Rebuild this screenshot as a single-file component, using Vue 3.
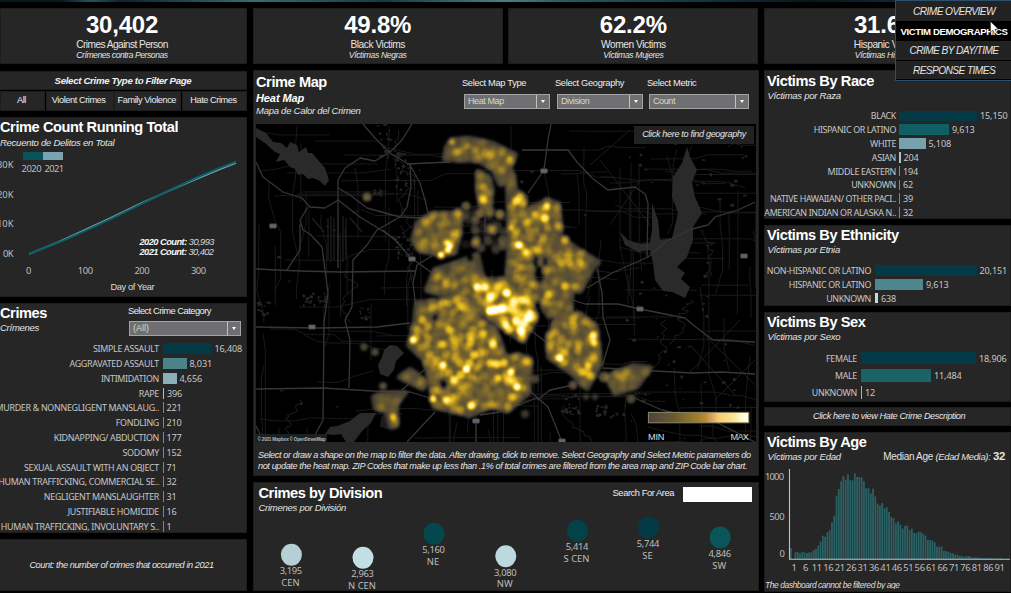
<script setup>
const kpis = [
  { value: '30,402', label: 'Crimes Against Person', es: 'Crímenes contra Personas' },
  { value: '49.8%', label: 'Black Victims', es: 'Víctimas Negras' },
  { value: '62.2%', label: 'Women Victims', es: 'Víctimas Mujeres' },
  { value: '31.6%', label: 'Hispanic Victims', es: 'Víctimas Hispanas' },
]
const crimes = [
  ['SIMPLE ASSAULT', 49, '16,408', '#033a45'],
  ['AGGRAVATED ASSAULT', 24, '8,031', '#4a8388'],
  ['INTIMIDATION', 14, '4,656', '#8aafb9'],
  ['RAPE', 1.5, '396', '#a9c3c6'],
  ['MURDER & NONNEGLIGENT MANSLAUG..', 1, '221', '#7b8788'],
  ['FONDLING', 1, '210', '#7b8788'],
  ['KIDNAPPING/ ABDUCTION', 1, '177', '#7b8788'],
  ['SODOMY', 1, '152', '#7b8788'],
  ['SEXUAL ASSAULT WITH AN OBJECT', 1, '71', '#7b8788'],
  ['HUMAN TRAFFICKING, COMMERCIAL SE..', 1, '32', '#7b8788'],
  ['NEGLIGENT MANSLAUGHTER', 1, '31', '#7b8788'],
  ['JUSTIFIABLE HOMICIDE', 1, '16', '#7b8788'],
  ['HUMAN TRAFFICKING, INVOLUNTARY S..', 1, '1', '#7b8788'],
]
const race = [
  ['BLACK', 78, '15,150', '#033a45'],
  ['HISPANIC OR LATINO', 50, '9,613', '#0f5f64'],
  ['WHITE', 26.5, '5,108', '#78a1ae'],
  ['ASIAN', 1.5, '204', '#a9c3c6'],
  ['MIDDLE EASTERN', 1, '194', '#7b9092'],
  ['UNKNOWN', 1, '62', '#7b8788'],
  ['NATIVE HAWAIIAN/ OTHER PACI..', 1, '39', '#7b8788'],
  ['AMERICAN INDIAN OR ALASKA N..', 1, '32', '#7b8788'],
]
const ethnicity = [
  ['NON-HISPANIC OR LATINO', 102, '20,151', '#033a45'],
  ['HISPANIC OR LATINO', 48.5, '9,613', '#4d878d'],
  ['UNKNOWN', 3.5, '638', '#bedbe0'],
]
const sex = [
  ['FEMALE', 115, '18,906', '#033a45'],
  ['MALE', 70, '11,484', '#1b6367'],
  ['UNKNOWN', 1, '12', '#9fb6ba'],
]
const divisions = [
  { n: '3,195', name: 'CEN', x: 291.4, y: 554.8, c: '#b5d0d5' },
  { n: '2,963', name: 'N CEN', x: 363, y: 557.7, c: '#c1dfe4' },
  { n: '5,160', name: 'NE', x: 434, y: 533.8, c: '#04484f' },
  { n: '3,080', name: 'NW', x: 505.8, y: 556.2, c: '#bcd9df' },
  { n: '5,414', name: 'S CEN', x: 577.5, y: 530.8, c: '#04424a' },
  { n: '5,744', name: 'SE', x: 648.5, y: 527.4, c: '#033a45' },
  { n: '4,846', name: 'SW', x: 720.2, y: 537.5, c: '#0a555a' },
]
const ages = [33, 0, 20, 22, 17, 22, 20, 18, 20, 20, 27, 30, 40, 52, 70, 67, 80, 86, 110, 130, 190, 210, 233, 249, 238, 254, 236, 236,
  257, 246, 246, 245, 233, 212, 212, 197, 211, 188, 166, 160, 168, 152, 155, 141, 126, 122, 107, 113, 103, 91, 100, 100, 86, 91, 78, 78,
  82, 80, 75, 70, 57, 57, 55, 50, 37, 37, 37, 24, 24, 21, 18, 17, 13, 13, 9, 9, 6, 9, 9, 6, 5, 5, 4, 4, 3, 3, 2, 3, 2, 2, 1, 1, 2]
const ageTicks = Array.from({ length: 19 }, (_, i) => 1 + i * 5)

/* seeded generator keeps the map identical on every load */
let seed = 77
function rnd() {
  seed = (seed * 1664525 + 1013904223) % 4294967296
  return seed / 4294967296
}
const highways = [
  'M256 162L263 177L283 192L302 198L310 207L325 208L338 200L360 217L397 240',
  'M338 268V180L345 168L360 158L375 161L390 152L402 140L412 124',
  'M363 124L375 138L390 153L410 165L420 183L425 200L428 213',
  'M407 164L450 162',
  'M410 165L411 187L407 207L400 217L377 230L367 245L353 260L352 307L345 320L350 340L349 388',
  'M338 188L350 195L367 208L400 217L423 218',
  'M308 207L300 220L303 230L310 234L322 247L325 270L328 293L324 323L323 420L315 435L312 442',
  'M300 224V250L287 270',
  'M256 269L300 271L340 272L416 271',
  'M256 327L317 328L377 327L410 323',
  'M256 389L323 388L373 391L410 392L430 398',
  'M383 230L397 242L410 257L432 273',
  'M432 256L417 265L413 283L416 308',
  'M435 412L407 442M476 420V442M435 360L402 390',
  'M573 300L585 304L618 304L640 309L685 318L697 328L713 340L755 342',
  'M587 288L612 273L648 257L665 242L692 229L708 225L715 217L738 210L755 202',
  'M522 150H568L577 162L592 178L608 190L635 187L645 194L648 203L647 257',
  'M551 124L548 140L544 170L528 193',
  'M597 268L602 293L603 317L610 340L602 367',
  'M603 368L655 371L692 373L722 372L755 374',
  'M522 373L532 393L548 407L562 442M537 400L550 390L573 385',
  'M632 397L662 410L718 423L755 442M530 330L550 345M485 232V215',
  'M256 426L264 442M480 415L500 412L537 398',
]
const streets = []
for (let i = 0; i < 150; i++) {
  const horiz = i % 2
  let x = 256 + rnd() * 500
  let y = 124 + rnd() * 318
  let d = `M${x.toFixed(0)} ${y.toFixed(0)}`
  const n = 3 + Math.floor(rnd() * 6)
  for (let k = 0; k < n; k++) {
    const step = 8 + rnd() * 20
    const drift = rnd() > 0.75 ? (rnd() - 0.5) * 14 : 0
    x += horiz ? step : drift
    y += horiz ? drift : step
    d += `L${x.toFixed(1)} ${y.toFixed(1)}`
  }
  streets.push(d)
}
const creeks = []
const creekStarts = [[398, 130], [405, 180], [402, 225], [565, 405], [665, 320], [700, 230], [345, 270], [300, 400], [690, 300]]
for (const [sx, sy] of creekStarts) {
  let x = sx
  let y = sy
  let d = `M${x} ${y}`
  for (let k = 0; k < 26; k++) {
    x += (rnd() - 0.5) * 8
    y += rnd() * 4
    d += `L${x.toFixed(1)} ${y.toFixed(1)}`
  }
  creeks.push(d)
}
const ponds = []
function pondGroup(cx, cy, w, h, n) {
  for (let i = 0; i < n; i++) {
    ponds.push({ x: cx + (rnd() - 0.5) * w, y: cy + (rnd() - 0.5) * h, rx: 0.6 + rnd() * 1.6, ry: 0.6 + rnd() * 1.2 })
  }
}
pondGroup(385, 142, 14, 40, 16)
pondGroup(402, 172, 14, 40, 24)
pondGroup(315, 300, 24, 14, 22)
pondGroup(265, 308, 14, 14, 14)
pondGroup(362, 315, 16, 16, 10)
pondGroup(378, 193, 8, 7, 12)
pondGroup(404, 248, 14, 22, 18)
pondGroup(570, 405, 20, 20, 20)
pondGroup(610, 412, 30, 14, 20)
pondGroup(720, 180, 60, 70, 14)
pondGroup(690, 340, 110, 160, 34)
pondGroup(500, 290, 480, 300, 40)

/* populated areas: polygon, sample spacing, strength */
const areas = [
  [[447, 147, 452, 140, 470, 139, 493, 144, 515, 155, 512, 162, 503, 174, 492, 168, 478, 160, 445, 159], 4.8, 0.5],
  [[478, 172, 488, 177, 492, 190, 490, 206, 481, 207, 478, 190], 4.5, 0.7],
  [[508, 174, 513, 175, 515, 190, 525, 197, 523, 213, 533, 207, 547, 201, 558, 204, 560, 223, 560, 237, 578, 250, 598, 262, 592, 268, 586, 280, 580, 291, 572, 290, 570, 310, 549, 316, 543, 307, 542, 293, 530, 305, 507, 280, 509, 260, 509, 220], 5, 0.6],
  [[430, 215, 459, 213, 459, 233, 455, 252, 442, 255, 420, 250, 413, 240, 418, 223], 4.8, 0.55],
  [[457, 209, 503, 207, 505, 250, 477, 253, 462, 247], 6.2, 0.65],
  [[435, 270, 457, 263, 477, 255, 483, 280, 497, 287, 487, 313, 470, 316, 447, 296, 427, 290], 5.2, 0.5],
  [[477, 280, 503, 280, 531, 300, 535, 318, 523, 341, 503, 327, 483, 313], 4, 0.95],
  [[417, 303, 457, 300, 473, 315, 495, 329, 503, 350, 530, 359, 528, 393, 507, 411, 493, 405, 470, 415, 434, 406, 432, 387, 425, 360, 409, 345, 415, 323], 4.7, 0.72],
  [[557, 317, 580, 314, 596, 327, 600, 363, 587, 388, 572, 373, 549, 357, 548, 340], 4.7, 0.68],
  [[607, 377, 633, 366, 650, 368, 637, 386, 615, 393], 4.8, 0.4],
  [[374, 397, 383, 394, 405, 393, 396, 403, 396, 425, 391, 427, 387, 410, 376, 408], 4.6, 0.35],
  [[400, 377, 410, 370, 427, 383, 423, 388], 4.8, 0.4],
  [[492, 165, 508, 160, 513, 180, 500, 184], 5.5, 0.3],
]
const bases = areas.filter((_, i) => i !== 4).map(([p]) => p.join(' '))
const gaps = [[494, 262, 9, 11], [497, 194, 4, 9], [468, 230, 5, 7], [540, 275, 5, 9], [536, 262, 3, 6], [443, 385, 4, 6], [545, 330, 5, 7], [512, 349, 7, 6], [470, 258, 3, 4], [488, 222, 4, 4], [436, 318, 4, 3], [545, 262, 3, 4]]
function inside(p, x, y) {
  let hit = false
  for (let i = 0, j = p.length - 2; i < p.length; j = i, i += 2) {
    if (p[i + 1] > y !== p[j + 1] > y && x < ((p[j] - p[i]) * (y - p[i + 1])) / (p[j + 1] - p[i + 1]) + p[i]) hit = !hit
  }
  return hit
}
const heat = []
for (const [poly, gap, power] of areas) {
  for (let y = 130; y < 436; y += gap) {
    for (let x = 360; x < 660; x += gap) {
      const px = x + (rnd() - 0.5) * gap * 1.2
      const py = y + (rnd() - 0.5) * gap * 1.2
      const o = power * (0.06 + rnd() ** 2.6 * 0.42)
      const skip = rnd() < 0.05
      if (skip || !inside(poly, px, py)) continue
      if (gaps.some(([gx, gy, a, b]) => ((px - gx) / a) ** 2 + ((py - gy) / b) ** 2 < 1)) continue
      heat.push({ x: px, y: py, r: 4.1, o })
    }
  }
}
const spots = [
  [452, 142, .4, 3], [510, 158, .22, 3], [468, 146, .2, 3.5], [458, 152, .2, 4], [475, 150, .2, 4], [483, 200, .45, 4], [516, 201, .6, 4], [520, 197, .45, 4], [547, 206, .6, 3.4], [545, 218, .55, 4], [519, 245, .95, 3.6], [526, 252, .5, 3.5],
  [448, 250, .85, 3.2], [441, 255, .9, 3.2], [447, 243, .65, 3], [450, 246, .75, 3], [565, 240, .45, 4], [511, 228, .5, 3], [477, 287, .85, 3.6], [485, 287, .65, 3.5], [507, 293, .9, 3.8],
  [490, 298, .6, 4], [490, 311, 1, 4], [495, 310, 1, 4], [502, 308.5, 1, 4], [506, 325, .75, 3.5], [516, 321, .75, 4], [528, 318, .8, 4.2], [521, 331, .85, 4], [530, 313, .75, 3.6], [514, 303, .45, 4],
  [521, 300, .4, 4], [524, 323, .65, 4], [413, 340, .85, 3.4], [443, 365, .85, 3.2], [466.5, 369, .95, 3.8], [511, 372, .85, 3.2], [517, 387, .95, 3.4], [454, 380, .65, 4], [433, 399, .75, 3.4], [446, 400, .7, 3.4],
  [471, 406, .75, 3.8], [493, 344, .6, 4], [474, 355, .5, 4], [497, 364, .55, 4.2], [504, 363, .5, 4], [490, 363, .45, 4], [483, 333, .4, 4], [559.5, 358, .95, 3.6], [593, 335, .6, 3.5], [594, 343, .6, 3.5],
  [588, 366, .5, 3.4], [565, 286, .45, 4], [548, 295, .45, 4], [393, 417, .5, 3.4], [450, 330, .4, 4], [470, 336, .4, 4], [498, 378, .5, 3.5], [512, 397, .45, 4], [535, 214, .4, 3.6], [580, 262, .35, 4],
  [367, 197, .28, 4], [364, 347, .18, 3.5], [375, 352, .2, 3.5], [466, 206, .25, 4], [631, 399, .2, 4], [535, 379, .17, 4], [525, 414, .13, 4], [586, 397, .12, 3], [595, 397, .12, 3], [383, 386, .22, 3.5], [573, 385, .22, 4], [604, 377, .22, 5],
]
for (const [x, y, o, r] of spots) heat.push({ x, y, r, o })
const signs = [[273, 226], [412, 259], [312, 327], [544, 171], [640, 309], [744, 256], [476, 421], [562, 441]]
</script>

<template>
  <div class="page">
    <div class="strip"></div>
    <header class="kpis">
      <section v-for="k in kpis" :key="k.value" class="panel kpi">
        <b>{{ k.value }}</b><span>{{ k.label }}</span><i>{{ k.es }}</i>
      </section>
    </header>

    <main class="cols">
      <div class="col left">
        <section class="filter">
          <h3 class="panel">Select Crime Type to Filter Page</h3>
          <div class="tabs">
            <button class="panel">All</button><button class="panel">Violent Crimes</button><button class="panel">Family Violence</button><button class="panel">Hate Crimes</button>
          </div>
        </section>

        <section class="panel running">
          <h2>Crime Count Running Total</h2>
          <p class="sub">Recuento de Delitos en Total</p>
          <svg class="plot" width="247" height="145" viewBox="0 151 247 145">
            <rect x="23" y="152" width="20" height="8" fill="#07555a" /><rect x="43" y="152" width="20" height="8" fill="#7aa3b0" />
            <g class="tick">
              <text x="21.5" y="172" textLength="20">2020</text><text x="44.5" y="172" textLength="19.5">2021</text>
              <text x="-3" y="167.6" textLength="16.5">30K</text><text x="-3" y="197.5" textLength="16.5">20K</text><text x="-3" y="227.2" textLength="16.5">10K</text><text x="3" y="256.5" textLength="10.5">0K</text>
              <text x="26" y="273.6">0</text><text x="77.7" y="273.6" textLength="15.5">100</text><text x="134.5" y="273.6" textLength="15">200</text><text x="191" y="273.6" textLength="15">300</text>
            </g>
            <path d="M29 254L60 241.3L84 230.3L112 217.2L140 203.8L168 191.3L196 179.2L220 169.3L236 163" fill="none" stroke="#7aa3b0" stroke-width="1.6" />
            <path d="M29 254L60 241.8L84 231.4L112 218.3L140 204.7L168 191L196 178L220 167.9L236 161.7" fill="none" stroke="#0b6266" stroke-width="2" />
            <g class="note"><text x="139.5" y="244.6" textLength="75"><tspan class="bold">2020 Count:</tspan> 30,993</text><text x="139.5" y="254.8" textLength="74.5"><tspan class="bold">2021 Count:</tspan> 30,402</text></g>
            <text class="cap" x="110.5" y="290" textLength="44">Day of Year</text>
          </svg>
        </section>

        <section class="panel crimes">
          <div class="crimes-head">
            <div><h2>Crimes</h2><p class="sub">Crímenes</p></div>
            <div class="field cat"><label>Select Crime Category</label><div class="select"><span>(All)</span><em></em></div></div>
          </div>
          <div class="bars b-crimes">
            <div v-for="r in crimes" :key="r[0]" class="row"><span class="name">{{ r[0] }}</span><span class="bar" :style="{ width: r[1] + 'px', background: r[3] }"></span><span class="val">{{ r[2] }}</span></div>
          </div>
        </section>
        <section class="panel count"><i>Count: the number of crimes that occurred in 2021</i></section>
      </div>

      <div class="col mid">
        <section class="panel mapcard">
          <div class="map-head">
            <div class="map-title"><h2>Crime Map</h2><h4>Heat Map</h4><p class="sub">Mapa de Calor del Crimen</p></div>
            <div class="field f1"><label>Select Map Type</label><div class="select"><span>Heat Map</span><em></em></div></div>
            <div class="field f2"><label>Select Geography</label><div class="select"><span>Division</span><em></em></div></div>
            <div class="field f3"><label>Select Metric</label><div class="select"><span>Count</span><em></em></div></div>
          </div>
          <div class="map">
            <svg width="500" height="318" viewBox="256 124 500 318">
              <defs>
                <filter id="heat" x="350" y="120" width="320" height="322" filterUnits="userSpaceOnUse" color-interpolation-filters="sRGB">
                  <feGaussianBlur stdDeviation="1.8" />
                  <feColorMatrix values="0 0 0 1 0  0 0 0 1 0  0 0 0 1 0  0 0 0 1 0" />
                  <feComponentTransfer>
                    <feFuncR type="table" tableValues=".27 .28 .34 .45 .6 .76 .9 1 1 1 1" />
                    <feFuncG type="table" tableValues=".25 .26 .3 .38 .49 .61 .74 .86 .95 1 1" />
                    <feFuncB type="table" tableValues=".22 .22 .21 .18 .16 .13 .12 .3 .65 .95 1" />
                    <feFuncA type="table" tableValues="0 .7 1 1 1 1 1 1 1 1 1" />
                  </feComponentTransfer>
                </filter>
                <mask id="holes" x="350" y="120" width="320" height="322" maskUnits="userSpaceOnUse">
                  <rect x="350" y="120" width="320" height="322" fill="#fff" />
                  <ellipse v-for="(g, i) in gaps" :key="i" :cx="g[0]" :cy="g[1]" :rx="g[2]" :ry="g[3]" fill="#000" />
                </mask>
                <linearGradient id="ramp"><stop offset="0" stop-color="#4c443a" /><stop offset=".25" stop-color="#695933" /><stop offset=".5" stop-color="#a08229" /><stop offset=".57" stop-color="#b98a37" /><stop offset=".64" stop-color="#dda565" /><stop offset=".7" stop-color="#f6cd6c" /><stop offset=".85" stop-color="#fbe493" /><stop offset=".93" stop-color="#fdfbd0" /><stop offset="1" stop-color="#fffdea" /></linearGradient>
              </defs>
              <rect x="256" y="124" width="500" height="318" fill="#000" />
              <g fill="none" stroke="#1c1c1c" stroke-width=".9">
                <path v-for="(d, i) in streets" :key="i" :d="d" /><path v-for="(d, i) in creeks" :key="'c' + i" :d="d" stroke="#222" />
                <path d="M328 218V260M331 216V262M334 218V260M343 216V262M346 218V258M312 218L324 232M350 218L362 232" stroke="#202020" stroke-width="1.2" />
                <path d="M700 330L755 385M690 345L735 395M740 320L690 372M755 360L715 400M610 225L640 180M600 160L650 225M630 130L590 165" stroke="#1f1f1f" />
              </g>
              <g fill="#2a2a2a">
                <path d="M256 128L266 133L273 142L281 143L287 148L290 142L297 145L299 152L306 147L308 153L312 153L318 160L325 168L329 180L325 186L320 181L313 178L308 179L303 174L298 175L295 169L290 167L284 160L276 162L280 154L275 152L266 144L256 137Z" />
                <path d="M687 147L690 157L697 170L692 182L695 197L702 213L693 227L693 240L687 257L677 267L685 273L681 279L690 287L685 298L672 292L663 291L655 280L653 263L650 250L638 252L625 245L620 232L628 240L640 244L650 243L652 230L652 203L658 220L660 240L672 238L678 213L672 197L673 177L682 163Z" />
                <path d="M384 350L390 345L397 346L404 353L396 361L394 370L388 377L380 374L378 365L382 357Z" />
                <path d="M325 434L330 427L337 426L350 421L360 413L376 413L371 423L362 431L354 442H346L341 434L333 435Z" />
                <path d="M381 418L387 410L391 421L388 429L380 427Z" fill="#1b1b1b" />
                <ellipse v-for="(p, i) in ponds" :key="i" :cx="p.x" :cy="p.y" :rx="p.rx" :ry="p.ry" fill="#242424" />
              </g>
              <g fill="none" stroke="#363636" stroke-width="1.3" stroke-linejoin="round"><path v-for="d in highways" :key="d" :d="d" /></g>
              <g filter="url(#heat)">
                <g opacity=".17" mask="url(#holes)"><polygon v-for="b in bases" :key="b" :points="b" fill="#fff" stroke="#fff" stroke-width="5.5" stroke-linejoin="round" /></g>
                <circle v-for="(h, i) in heat" :key="i" :cx="h.x" :cy="h.y" :r="h.r" fill="#fff" :fill-opacity="h.o" />
              </g>
              <rect v-for="(s, i) in signs" :key="i" :x="s[0] - 3.5" :y="s[1] - 2.2" width="7" height="4.4" rx="1" fill="#62656a" stroke="#33373b" stroke-width=".8" />
              <rect x="256" y="434" width="71" height="8" fill="#1b2023" />
              <text class="credit" x="257.5" y="441.4" textLength="68">© 2021 Mapbox © OpenStreetMap</text>
              <rect x="648.4" y="412.4" width="100.4" height="10.4" fill="url(#ramp)" stroke="#89876a" />
              <text class="minmax" x="648" y="440" textLength="16.5">MIN</text><text class="minmax" x="730.5" y="440" textLength="18.5">MAX</text>
            </svg>
            <div class="find"><i>Click here to find geography</i></div>
          </div>
          <svg class="help" width="500" height="26" viewBox="254 447 500 26">
            <text x="258" y="458.3" textLength="493">Select or draw a shape on the map to filter the data. After drawing, click to remove. Select Geography and Select Metric parameters do</text>
            <text x="258" y="468.7" textLength="489.5">not update the heat map. ZIP Codes that make up less than .1% of total crimes are filtered from the area map and ZIP Code bar chart.</text>
          </svg>
        </section>

        <section class="panel division">
          <div class="div-head">
            <div><h2>Crimes by Division</h2><p class="sub">Crimenes por División</p></div>
            <div class="search"><label>Search For Area</label><input aria-label="Search For Area" /></div>
          </div>
          <svg width="504" height="75" viewBox="254 514 504 75">
            <g v-for="d in divisions" :key="d.name" class="lab">
              <ellipse :cx="d.x" :cy="d.y" rx="10.5" ry="11" :fill="d.c" />
              <text :x="d.x - 11.7" :y="d.y + 19.6" textLength="22.5">{{ d.n }}</text>
              <text :x="d.x - 1" :y="d.y + 31.2" text-anchor="middle">{{ d.name }}</text>
            </g>
          </svg>
        </section>
      </div>

      <div class="col right">
        <section class="panel race">
          <h2>Victims By Race</h2><p class="sub">Víctimas por Raza</p>
          <div class="bars b-race"><div v-for="r in race" :key="r[0]" class="row"><span class="name">{{ r[0] }}</span><span class="bar" :style="{ width: r[1] + 'px', background: r[3] }"></span><span class="val">{{ r[2] }}</span></div></div>
        </section>
        <section class="panel eth">
          <h2>Victims By Ethnicity</h2><p class="sub">Víctimas por Etnia</p>
          <div class="bars b-eth"><div v-for="r in ethnicity" :key="r[0]" class="row"><span class="name">{{ r[0] }}</span><span class="bar" :style="{ width: r[1] + 'px', background: r[3] }"></span><span class="val">{{ r[2] }}</span></div></div>
        </section>
        <section class="panel sex">
          <h2>Victims By Sex</h2><p class="sub">Víctimas por Sexo</p>
          <div class="bars b-sex"><div v-for="r in sex" :key="r[0]" class="row"><span class="name">{{ r[0] }}</span><span class="bar" :style="{ width: r[1] + 'px', background: r[3] }"></span><span class="val">{{ r[2] }}</span></div></div>
        </section>
        <section class="panel hate"><i>Click here to view Hate Crime Description</i></section>
        <section class="panel age">
          <h2>Victims By Age</h2>
          <div class="age-sub"><p class="sub">Víctimas por Edad</p><p class="median">Median Age <i>(Edad Media):</i> <b>32</b></p></div>
          <svg width="246" height="127" viewBox="765 463 246 127">
            <g fill="#2a6165"><rect v-for="(a, i) in ages" :key="i" :x="790 + i * 2.283" :y="560 - a / 3" width="1.75" :height="a / 3" /></g>
            <path d="M789.5 470V560.3H1011" fill="none" stroke="#bfc3c3" stroke-width="1.1" />
            <g class="tick">
              <text x="765" y="481" textLength="19">1000</text><text x="769.5" y="520.6" textLength="15">500</text><text x="779.5" y="557.6">0</text>
              <text v-for="(t, i) in ageTicks" :key="t" :x="794.2 + i * 11.42" y="572.3" text-anchor="middle" :textLength="t > 9 ? 10.4 : 4.5">{{ t }}</text>
            </g>
            <text class="foot" x="765" y="588.6" textLength="135">The dashboard cannot be filtered by age</text>
          </svg>
        </section>
      </div>
    </main>

    <nav class="menu">
      <a>CRIME OVERVIEW</a><a class="on">VICTIM DEMOGRAPHICS</a><a>CRIME BY DAY/TIME</a><a>RESPONSE TIMES</a>
      <svg class="cursor" width="9" height="14" viewBox="0 0 9 14"><path d="M.5.5V11.2L3 9L4.6 12.8L6.6 12L5 8.2H8.4Z" fill="#fff" stroke="#222" stroke-width=".5" /></svg>
    </nav>
  </div>
</template>

<style>
body { background: #000; overflow: hidden; }
</style>
<style scoped>
* { box-sizing: border-box; }
.page { position: relative; width: 1011px; height: 593px; overflow: hidden; background: #000; color: #e4e4e4; font-family: "Liberation Sans", Arial, sans-serif; }
.strip { height: 2px; background: linear-gradient(90deg, #06181c 0 6%, #24545c 9%, #0b2429 12%, #376b73 25%, #153b42 38%, #478088 50%, #265862 56%, #10343b 70%, #07161a 80%, #133e48); }
.panel { background: #262626; border: 1px solid #1d1d1d; }
h2, h3, h4, p { margin: 0; white-space: nowrap; }
svg { display: block; }
.kpis { display: grid; grid-template-columns: 247px 250px 250px 247px; column-gap: 5.67px; margin: 6px 0 0; height: 56px; }
.kpi { display: flex; flex-direction: column; align-items: center; white-space: nowrap; padding-top: 2.5px; }
.kpi:first-child { padding-right: 3px; }
.kpi b { font-size: 24px; line-height: 26px; color: #fff; letter-spacing: -.2px; }
.kpi span { font-size: 10.2px; line-height: 11px; margin-top: 1px; letter-spacing: -.58px; }
.kpi i { font-size: 8.6px; line-height: 10.5px; letter-spacing: -.45px; }
.kpi:nth-child(n+2) span { letter-spacing: -.45px; }
.kpi:nth-child(n+2) i { letter-spacing: -.35px; }
.cols { display: grid; grid-template-columns: 253px 511px 247px; margin-top: 6px; }
.left { width: 247px; }
.mid { width: 506px; }
.col { display: flex; flex-direction: column; gap: 6px; }
h2 { font-size: 14.6px; line-height: 17px; font-weight: bold; color: #fff; letter-spacing: -.42px; }
.sub { font-size: 9.5px; line-height: 11px; font-style: italic; letter-spacing: -.26px; }
.filter { margin-top: 1px; }
.filter h3 { height: 19px; font-size: 9.7px; line-height: 17px; letter-spacing: -.34px; font-style: italic; text-align: center; color: #f2f2f2; border-left: 0; margin-bottom: 1px; }
.tabs { display: grid; grid-template-columns: 45px 68px 67px 65px; gap: .67px; }
.tabs button { height: 19.5px; padding: 0 2px 0 0; font: 9.2px/17px "Liberation Sans", sans-serif; letter-spacing: -.42px; color: #eee; white-space: nowrap; }
.running { height: 180px; border-left: 0; padding-top: 0; overflow: hidden; }
.running h2 { line-height: 19px; }
.plot { margin-top: 3px; }
.tick, .lab { font: 9.4px "Noto Sans", sans-serif; fill: #bdbdbd; }
.note { font-size: 9.3px; font-style: italic; fill: #d8d8d8; }
.bold { font-weight: bold; fill: #f4f4f4; }
.cap { font-size: 9.2px; fill: #ddd; }
.crimes { height: 230px; border-left: 0; }
.crimes-head { display: flex; justify-content: space-between; height: 37px; padding: 1px 5px 0 0; }
.field label, .search label { display: block; font-size: 9.3px; line-height: 12px; color: #eee; white-space: nowrap; letter-spacing: -.5px; }
.search label { letter-spacing: -.42px; }
.select { display: flex; justify-content: space-between; height: 15px; background: #6f6f71; border: 1px solid #a4a4a4; font-size: 9px; line-height: 13px; letter-spacing: -.4px; color: #d5dac8; padding-left: 3px; }
.cat .select { letter-spacing: 0; }
.select em { width: 13px; border-left: 1px solid #c2c2c2; display: flex; align-items: center; justify-content: center; }
.select em::after { content: ""; border: 2.5px solid transparent; border-top: 3px solid #fff; border-bottom: 0; }
.cat { width: 112px; }
.cat label { margin-left: -1px; }
.cat .select { margin-top: 4px; }
.row { display: flex; align-items: center; white-space: nowrap; font-family: "Noto Sans", sans-serif; color: #c6c6c6; }
.name { flex: none; font-size: 8.9px; letter-spacing: -.3px; display: flex; justify-content: flex-end; }
.bar { flex: none; }
.val { margin-left: 3px; font-size: 9.1px; letter-spacing: -.15px; }
.b-crimes .row { height: 14.77px; }
.b-crimes .name { width: 159px; margin-right: 3.5px; }
.b-crimes .bar { height: 11px; }
.b-crimes { margin-top: 1px; }
.b-race .name { letter-spacing: -.36px; }
.count { height: 52px; border-left: 0; padding-right: 3px; display: flex; align-items: center; justify-content: center; font-size: 9.2px; letter-spacing: -.42px; white-space: nowrap; }
.mapcard { height: 406px; }
.map-head { display: flex; height: 53px; padding-left: 2px; }
.map-title { width: 208px; padding-top: 3px; }
h4 { font-size: 11px; line-height: 14px; font-style: italic; color: #fff; letter-spacing: -.1px; }
.field { flex: none; }
.f1, .f2, .f3 { padding-top: 6px; }
.f1 .select, .f2 .select, .f3 .select { margin-top: 5px; }
.f1 { width: 86px; margin-right: 7px; }
.f2 { width: 86px; margin-right: 6px; }
.f3 { width: 100px; }
.f1 label, .f2 label, .f3 label { margin-left: -2px; letter-spacing: -.33px; }
.map { position: relative; margin-left: 2px; width: 500px; height: 318px; }
.find { position: absolute; left: 378px; top: 2px; width: 120px; height: 18px; background: #222; font-size: 9.1px; line-height: 17px; letter-spacing: -.34px; text-align: center; white-space: nowrap; }
.credit { font-size: 4.6px; fill: #aeb9bd; font-weight: bold; }
.minmax { font-size: 9.2px; fill: #ddd; }
.help { margin-top: 5px; font-size: 9.1px; font-style: italic; }
.help text { fill: #e4e4e4; }
.division { height: 109px; }
.div-head { display: flex; justify-content: space-between; height: 31px; padding: 2px 6px 0 4.5px; }
.search { display: flex; gap: 9px; padding-top: 2px; }
.search input { width: 69px; height: 15px; border: 0; padding: 0; background: #fff; }
.right h2 { margin: 1px 0 0 2px; }
.right .sub { margin-left: 2.5px; }
.race { height: 149px; }
.race h2 { line-height: 18px; }
.eth { height: 81px; }
.sex { height: 90px; }
.b-race { margin-top: 8px; }
.b-race .row { height: 13.8px; }
.b-race .name { width: 131px; margin-right: 3px; }
.b-race .bar { height: 10.5px; }
.b-eth { margin-top: 8.5px; }
.b-eth .row { height: 13.9px; }
.b-eth .name { width: 106px; margin-right: 3.5px; letter-spacing: -.36px; }
.b-eth .bar { height: 10.5px; }
.b-sex { margin-top: 7.5px; }
.b-sex .row { height: 17.3px; }
.b-sex .name { width: 92px; margin-right: 4px; }
.b-sex .bar { height: 12.5px; }
.hate { height: 19px; margin-top: -1px; font-size: 9.1px; line-height: 16px; letter-spacing: -.38px; padding-left: 48px; white-space: nowrap; }
.age { height: 160px; margin-top: -.5px; overflow: hidden; }
.age-sub { display: flex; justify-content: space-between; padding-right: 5px; }
.median { font-size: 10px; line-height: 11px; letter-spacing: -.3px; }
.median i { font-size: 9.4px; }
.median b { font-size: 11.4px; }
.foot { font-size: 8.5px; font-style: italic; fill: #ddd; }
.menu { position: absolute; left: 895px; top: 0; width: 118px; height: 81px; border: 1px solid #29516e; background: #222; padding-top: 1px; }
.menu a { display: block; height: 19.6px; line-height: 19px; font-size: 10.2px; letter-spacing: -.6px; font-style: italic; text-align: center; border-bottom: 1px solid #000; white-space: nowrap; }
.menu a.on { background: #000; color: #fff; font-weight: bold; font-style: normal; font-size: 9.6px; letter-spacing: -.4px; }
.cursor { position: absolute; left: 94px; top: 20px; }
</style>
